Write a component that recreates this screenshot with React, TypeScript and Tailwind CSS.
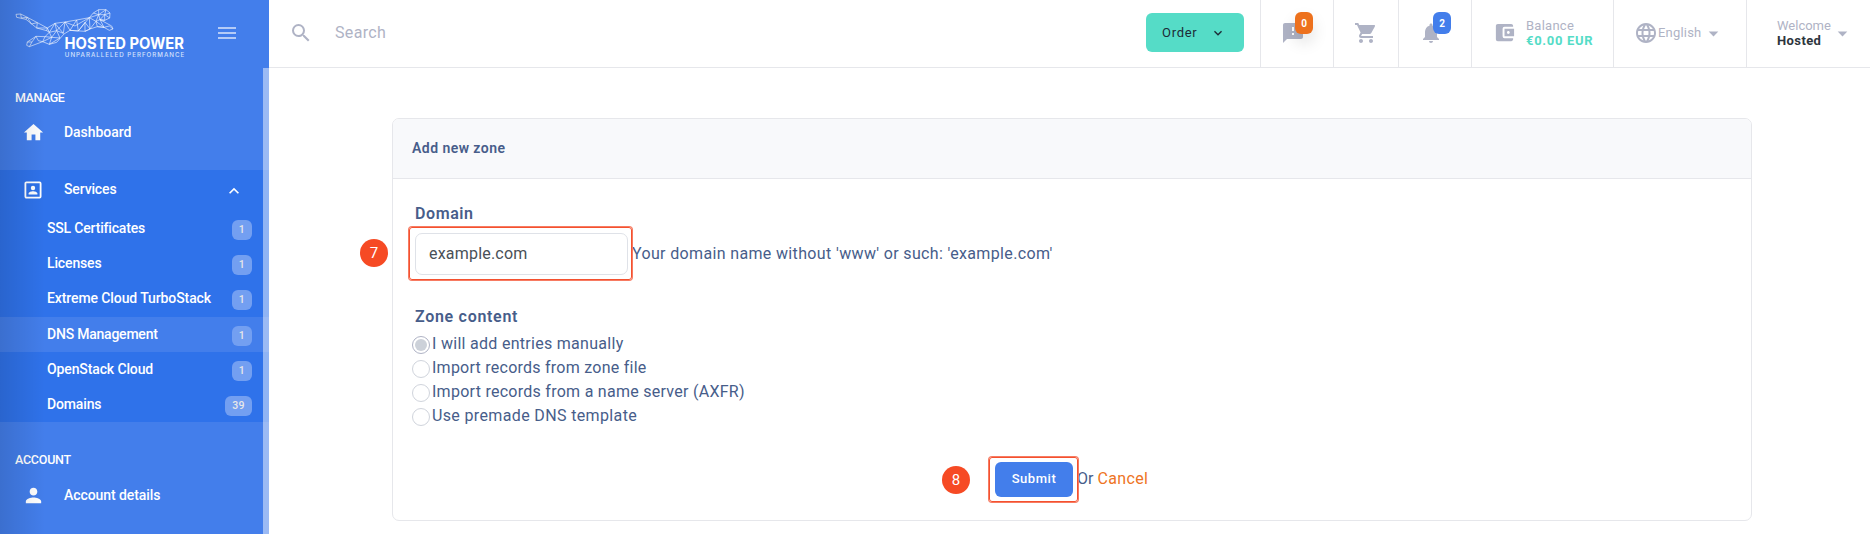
import type { ReactNode } from "react";
import {
  MdAccountBalanceWallet,
  MdArrowDropDown,
  MdExpandLess,
  MdExpandMore,
  MdFeedback,
  MdHome,
  MdLanguage,
  MdMenu,
  MdNotifications,
  MdPerson,
  MdSearch,
  MdShoppingCart,
} from "react-icons/md";

const services = [
  { name: "SSL Certificates", count: 1, track: "tracking-[-0.18px]" },
  { name: "Licenses", count: 1, track: "tracking-[-0.14px]" },
  { name: "Extreme Cloud TurboStack", count: 1, track: "tracking-[-0.1px]" },
  { name: "DNS Management", count: 1, active: true, track: "tracking-[-0.22px]" },
  { name: "OpenStack Cloud", count: 1, track: "tracking-[-0.12px]" },
  { name: "Domains", count: 39, track: "tracking-[-0.14px]" },
];

const options = [
  { label: "I will add entries manually", track: "tracking-[0.29px]" },
  { label: "Import records from zone file", track: "tracking-[0.25px]" },
  { label: "Import records from a name server (AXFR)", track: "tracking-[0.27px]" },
  { label: "Use premade DNS template", track: "tracking-[0.36px]" },
];

function Logo() {
  return (
    <svg className="absolute left-0 top-0 h-[68px] w-[200px]" viewBox="0 0 200 68" fill="none">
      <g transform="translate(10 4) scale(0.3333)" stroke="#fff" strokeWidth="2.2" strokeOpacity="0.8" strokeLinejoin="round">
        <path d="M18 31L32 30L52 40L82 56L112 72L135 58L165 54L200 48L238 41L250 27L266 17L288 17L300 27L299 42L284 49L270 47L305 66L309 75L298 79L282 70L262 68L240 75L225 82L180 79L162 90L140 115L118 121L98 113L58 128L50 124L52 114L78 97L105 98L118 85L110 80L80 72L48 46L20 40Z" />
        <path d="M32 30L34 42L52 40L48 46M52 40L64 60L82 56L80 72L112 72L110 80M112 72L118 85L135 58L140 80L165 54L160 88L140 80L118 85L125 100L105 98L98 113L125 100L140 80L150 102L125 100L118 121L150 102M135 58L160 88M165 54L180 79L200 48L205 81L180 79M165 54L195 66L238 41L205 81L225 55L225 82L240 75L225 55M238 41L240 75L258 52L238 41L266 32L258 52L262 68L282 70L298 66L309 75M258 52L270 47L266 32L250 27M266 17L266 32L288 17L284 32L300 27M266 32L284 32L284 49L270 47L284 32L299 42M258 52L282 70L270 47M52 114L66 114L78 97L85 110L98 113M66 114L58 128" />
      </g>
      <text x="64.5" y="48.8" fill="#fff" fontFamily="Inter" fontWeight="700" fontSize="15.6" textLength="119.5" lengthAdjust="spacingAndGlyphs">HOSTED POWER</text>
      <text x="64.8" y="56.8" fill="#d5e2fc" fontFamily="Inter" fontSize="6.2" textLength="119.5" lengthAdjust="spacing">UNPARALLELED PERFORMANCE</text>
    </svg>
  );
}

function PortraitIcon() {
  return (
    <svg className="ml-[2px] mt-[-1px] h-[18px] w-[18px]" viewBox="0 0 18 18">
      <rect x="1.4" y="1.4" width="15.2" height="15.2" rx="1" fill="none" stroke="#fff" strokeWidth="1.8" />
      <circle cx="9" cy="7" r="2.2" fill="#fff" />
      <path d="M4.6 13.4v-.8c0-1.5 2.9-2.3 4.4-2.3s4.4.8 4.4 2.3v.8z" fill="#fff" />
    </svg>
  );
}

function Sidebar() {
  return (
    <aside className="relative h-[534px] w-[269px] shrink-0 overflow-hidden bg-[#437eeb] text-[14px] font-medium text-white">
      <header className="relative flex h-[68px] items-center">
        <Logo />
        <MdMenu className="ml-[215px] mt-[-2px] size-6 text-[#b4cbf7]" />
      </header>
      <h2 className="mt-[21px] h-[18px] pl-[15px] text-[12.5px] leading-[18px] tracking-[-0.45px]">MANAGE</h2>
      <a className="mt-[13px] flex h-6 items-center pl-[22px]">
        <MdHome className="size-[23px]" />
        <span className="ml-[19px] tracking-[-0.04px]">Dashboard</span>
      </a>
      <section className="mt-[26px] h-[252px] bg-[#2f72ea]">
        <div className="flex h-[41px] items-center pl-[22px]">
          <PortraitIcon />
          <span className="ml-[22px] mt-[-2px] w-[160px] tracking-[-0.14px]">Services</span>
          <MdExpandLess className="mt-[1px] size-5" />
        </div>
        {services.map((s) => (
          <a
            key={s.name}
            className={
              s.active
                ? "mt-px flex h-[35px] items-center bg-[#437eeb] pl-[47px] pr-[17px]"
                : "flex h-[35px] items-center pl-[47px] pr-[17px]"
            }
          >
            <span className={s.track}>{s.name}</span>
            <span className="mt-[3px] ml-auto flex h-5 min-w-5 items-center justify-center rounded-[6px] bg-[#739ff1] px-[7px] text-[10.5px] tracking-[0.4px] text-[#e8e8e8]">
              {s.count}
            </span>
          </a>
        ))}
      </section>
      <h2 className="mt-[29px] h-[18px] pl-[15px] text-[12.5px] leading-[18px] tracking-[-0.25px]">ACCOUNT</h2>
      <a className="mt-[14px] flex h-6 items-center pl-[22px]">
        <MdPerson className="size-[23px]" />
        <span className="ml-[19px] tracking-[-0.08px]">Account details</span>
      </a>
      <div className="pointer-events-none absolute inset-y-0 left-0 w-[45px] bg-linear-to-r from-black/12 to-transparent" />
      <div className="absolute bottom-0 right-0 top-[68px] w-[6px] bg-white/47" />
    </aside>
  );
}

function Cell({ className, children }: { className: string; children?: ReactNode }) {
  return <div className={`relative flex h-full shrink-0 items-center border-l border-[#e6e7eb] ${className}`}>{children}</div>;
}

function TopBar() {
  return (
    <header className="flex h-[68px] items-center border-b border-[#e6e7eb] text-[14px] text-[#afb3c5]">
      <MdSearch className="ml-5 mt-[-2px] size-6" />
      <span className="ml-[22px] mt-[-2px] text-[16px] tracking-[0.35px]">Search</span>
      <button className="ml-auto mr-4 mt-[-2px] flex h-[39px] w-[98px] shrink-0 items-center rounded-[6px] bg-[#55dcc7] pl-4 text-[13px] tracking-[0.7px] text-[#1d2b36]">
        Order
        <MdExpandMore className="ml-[13px] size-4" />
      </button>
      <Cell className="w-[73px] pl-[20px]">
        <MdFeedback className="mt-[-2px] size-6" />
        <span className="absolute left-[34px] top-3 flex h-[22px] w-[18px] items-center justify-center rounded-[6px] bg-[#ed711d] text-[10px] font-bold text-white shadow-[0_8px_16px_rgba(0,0,0,0.12)]">0</span>
      </Cell>
      <Cell className="w-[65px] pl-[20px]">
        <MdShoppingCart className="mt-[-2px] size-6" />
      </Cell>
      <Cell className="w-[73px] pl-[20px]">
        <MdNotifications className="mt-[-2px] size-6" />
        <span className="absolute left-[34px] top-3 flex h-[22px] w-[18px] items-center justify-center rounded-[6px] bg-[#437eeb] text-[10px] font-bold text-white">2</span>
      </Cell>
      <Cell className="w-[142px] pl-[21px]">
        <MdAccountBalanceWallet className="mt-[-2px] size-[23px]" />
        <div className="ml-[10px] mt-[-1px] text-[13px] leading-[15px]">
          <div className="tracking-[0.25px]">Balance</div>
          <div className="font-bold tracking-[0.7px] text-[#55dcc7]">€0.00 EUR</div>
        </div>
      </Cell>
      <Cell className="w-[133px] pl-[20px]">
        <MdLanguage className="mt-[-2px] size-6" />
        <span className="mt-[-2px] text-[13px] tracking-[0.2px]">English</span>
        <MdArrowDropDown className="ml-px size-[23px]" />
      </Cell>
      <Cell className="w-[124px] pl-[30px]">
        <div className="mt-[-1px] text-[13px] leading-[15px]">
          <div>Welcome</div>
          <div className="font-bold tracking-[0.4px] text-[#2d353d]">Hosted</div>
        </div>
        <MdArrowDropDown className="size-[23px]" />
      </Cell>
    </header>
  );
}

function Step({ n, className }: { n: number; className: string }) {
  return (
    <span className={`absolute flex size-7 items-center justify-center rounded-full bg-[#f64a24] text-[15px] text-white ${className}`}>
      {n}
    </span>
  );
}

function ZoneCard() {
  return (
    <main className="relative ml-[123px] mt-[50px] flex h-[403px] w-[1360px] flex-col rounded-[7px] border border-[#e6e7eb] text-[16px] text-[#475d8a]">
      <h1 className="flex h-[60px] shrink-0 items-center rounded-t-[6px] border-b border-[#e6e7eb] bg-[#f8f9fb] pl-[19px] text-[14px] font-semibold tracking-[0.45px]">
        Add new zone
      </h1>
      <div className="pl-[22px]">
        <h2 className="mt-6 h-[22px] font-semibold leading-[22px] tracking-[0.6px]">Domain</h2>
        <div className="relative mt-[8px] flex h-[42px] items-center">
          <div className="flex h-[42px] w-[213px] items-center rounded-[7px] border border-[#dfe2e8] pl-[13px] tracking-[0.2px] text-[#495057]">
            example.com
          </div>
          <span className="ml-[4px] tracking-[0.35px]">Your domain name without 'www' or such: 'example.com'</span>
          <div className="absolute left-[-6px] top-[-6px] h-[53px] w-[223px] rounded-[3px] border border-[#f4512f] shadow-[0_0_0_1px_#f77b62]" />
          <Step n={7} className="left-[-55px] top-[6px]" />
        </div>
        <h2 className="mt-[31px] h-[22px] font-semibold leading-[22px] tracking-[0.7px]">Zone content</h2>
        <div className="ml-[-3px] mt-[3px]">
          {options.map((o, i) => (
            <label key={o.label} className="flex h-6 items-center">
              <span className={i === 0 ? "mt-[3px] flex size-[18px] items-center justify-center rounded-full border border-[#afb3c5]" : "mt-[3px] size-[18px] rounded-full border border-[#d0d4dc]"}>
                {i === 0 && <span className="size-3 rounded-full bg-[#ccd1d9]" />}
              </span>
              <span className={`ml-[2px] mt-[2px] ${o.track}`}>{o.label}</span>
            </label>
          ))}
        </div>
      </div>
      <footer className="relative ml-[602px] mt-[35px] flex h-[35px] items-center">
        <button className="flex h-[35px] w-[78px] items-center justify-center rounded-[6px] bg-[#437eeb] pb-px text-[13px] font-medium tracking-[0.55px] text-white">Submit</button>
        <span className="ml-[4px] mt-[-1px]">Or</span>
        <a className="ml-1 mt-[-1px] tracking-[0.35px] text-[#ee7424]">Cancel</a>
        <div className="absolute left-[-6px] top-[-5px] h-[45px] w-[89px] rounded-[3px] border border-[#f4512f] shadow-[0_0_0_1px_#f77b62]" />
        <Step n={8} className="left-[-53px] top-[4px]" />
      </footer>
    </main>
  );
}

export default function App() {
  return (
    <div className="flex h-[534px] w-[1870px] overflow-hidden bg-white font-[Roboto,sans-serif]">
      <Sidebar />
      <div className="min-w-0 flex-1">
        <TopBar />
        <ZoneCard />
      </div>
    </div>
  );
}
